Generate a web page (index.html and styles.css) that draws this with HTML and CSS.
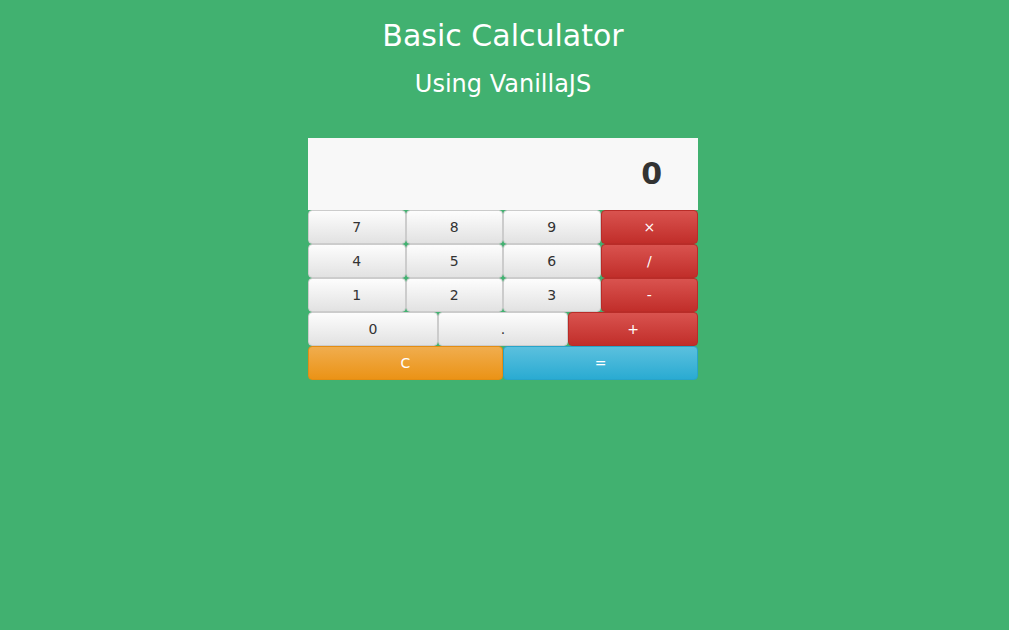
FILE: index.html
```html
<!DOCTYPE html>
<html>
<head>
<meta charset="utf-8">
<link rel="stylesheet" href="styles.css">
</head>
<body>
<h1 class="title">Basic Calculator</h1>
<h2 class="subtitle">Using VanillaJS</h2>
<div class="calc">
  <div class="display">0</div>
  <div class="row">
    <button class="btn">7</button><button class="btn">8</button><button class="btn">9</button><button class="btn op">×</button>
  </div>
  <div class="row">
    <button class="btn">4</button><button class="btn">5</button><button class="btn">6</button><button class="btn op">/</button>
  </div>
  <div class="row">
    <button class="btn">1</button><button class="btn">2</button><button class="btn">3</button><button class="btn op">-</button>
  </div>
  <div class="row">
    <button class="btn">0</button><button class="btn">.</button><button class="btn op">+</button>
  </div>
  <div class="row">
    <button class="btn clear">C</button><button class="btn equal">=</button>
  </div>
</div>
</body>
</html>
```
FILE: styles.css
```css
html, body {
  margin: 0;
  padding: 0;
  background: #41b170;
  font-family: "DejaVu Sans", sans-serif;
}
body {
  padding-right: 3px;
}
.title {
  margin: 0;
  padding-top: 17px;
  text-align: center;
  color: #fff;
  font-weight: normal;
  font-size: 30px;
  line-height: 38px;
}
.subtitle {
  margin: 0;
  padding-top: 14px;
  text-align: center;
  color: #fff;
  font-weight: normal;
  font-size: 24px;
  line-height: 30px;
}
.calc {
  width: 390px;
  margin: 39px auto 0;
}
.display {
  height: 72px;
  background: #f8f8f8;
  color: #333;
  font-weight: bold;
  font-size: 30px;
  line-height: 72px;
  text-align: right;
  padding-right: 36px;
  box-sizing: border-box;
}
.row {
  display: flex;
  height: 34px;
}
.btn {
  flex: 1 1 0;
  margin: 0;
  height: 34px;
  box-sizing: border-box;
  border: 1px solid #ccc;
  border-radius: 4px;
  background: linear-gradient(#fdfdfd, #e2e2e2);
  font-family: "DejaVu Sans", sans-serif;
  font-size: 14px;
  color: #333;
  padding: 0;
}
.op {
  background: linear-gradient(#d9534f, #c12e2a);
  border-color: #b92c28;
  color: #fff;
}
.clear {
  background: linear-gradient(#f0ad4e, #eb9316);
  border-color: #e38d13;
  color: #fff;
}
.equal {
  background: linear-gradient(#5bc0de, #2aabd2);
  border-color: #28a4c9;
  color: #fff;
}
```
